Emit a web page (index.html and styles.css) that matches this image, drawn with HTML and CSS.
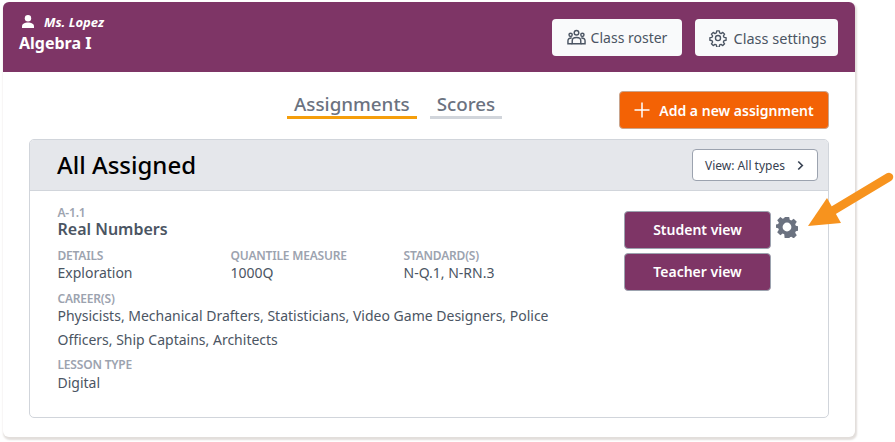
FILE: index.html
```html
<!DOCTYPE html>
<html lang="en">
<head>
<meta charset="utf-8">
<title>Algebra I</title>
<link rel="stylesheet" href="styles.css">
</head>
<body>
<div class="page">
  <header class="class-bar">
    <div class="class-info">
      <div class="teacher">
        <svg class="person" viewBox="0 0 16 16" width="16" height="16"><circle cx="8" cy="4.2" r="3.2" fill="#fff"/><path d="M2 14v-1.600C2 9.800 5 8.600 8 8.600s6 1.200 6 3.800V14z" fill="#fff"/></svg>
        <span>Ms. Lopez</span>
      </div>
      <div class="class-name">Algebra I</div>
    </div>
    <div class="class-actions">
      <button class="light-btn roster">
        <svg viewBox="0 0 20 20" width="19" height="19" fill="none" stroke="#4b5563" stroke-width="1.500"><circle cx="10" cy="5" r="2.400"/><circle cx="3.800" cy="7.200" r="1.700"/><circle cx="16.200" cy="7.200" r="1.700"/><path d="M5.500 16.500v-3.200c0-2 2-3.300 4.500-3.300s4.500 1.300 4.500 3.300v3.200z"/><path d="M5 10.500C2.500 10.300 1 11.500 1 13.500v3h4.500M15 10.500c2.500-.2 4 1 4 3v3h-4.500"/></svg>
        Class roster
      </button>
      <button class="light-btn settings">
        <svg viewBox="0 0 24 24" width="18" height="18" fill="none" stroke="#4b5563" stroke-width="1.800" stroke-linejoin="round"><path d="M10.300 2.500h3.400l.5 2.800 1.900.8 2.300-1.600 2.400 2.400-1.600 2.300.8 1.900 2.800.5v3.400l-2.800.5-.8 1.900 1.600 2.300-2.400 2.400-2.300-1.600-1.900.8-.5 2.800h-3.400l-.5-2.800-1.900-.8-2.300 1.600-2.400-2.400 1.600-2.300-.8-1.900-2.800-.5v-3.400l2.800-.5.8-1.900-1.600-2.300 2.400-2.400 2.300 1.600 1.900-.8z"/><circle cx="12" cy="12" r="3.400"/></svg>
        Class settings
      </button>
    </div>
  </header>

  <div class="toolbar">
    <nav class="tabs">
      <a class="tab active">Assignments</a>
      <a class="tab">Scores</a>
    </nav>
    <button class="add-btn">
      <svg viewBox="0 0 16 16" width="16" height="16" stroke="#fff" stroke-width="1.500"><path d="M8 .5v15M.5 8h15"/></svg>
      Add a new assignment
    </button>
  </div>

  <section class="panel">
    <div class="panel-head">
      <h1>All Assigned</h1>
      <button class="view-btn">View: All types
        <svg viewBox="0 0 10 12" width="9" height="11" fill="none" stroke="#374151" stroke-width="1.800"><path d="M2.500 1.500 7 6l-4.500 4.500"/></svg>
      </button>
    </div>
    <div class="panel-body">
      <div class="lesson">
        <div class="label code">A-1.1</div>
        <h2>Real Numbers</h2>
        <div class="meta-row">
          <div class="meta"><div class="label">DETAILS</div><div class="value">Exploration</div></div>
          <div class="meta"><div class="label">QUANTILE MEASURE</div><div class="value">1000Q</div></div>
          <div class="meta"><div class="label">STANDARD(S)</div><div class="value">N-Q.1, N-RN.3</div></div>
        </div>
        <div class="block">
          <div class="label">CAREER(S)</div>
          <div class="value careers">Physicists, Mechanical Drafters, Statisticians, Video Game Designers, Police Officers, Ship Captains, Architects</div>
        </div>
        <div class="block lesson-type">
          <div class="label">LESSON TYPE</div>
          <div class="value">Digital</div>
        </div>
      </div>
      <div class="views">
        <div class="view-row">
          <button class="plum-btn">Student view</button>
          <svg class="gear" viewBox="0 0 24 24" width="22" height="22"><path fill="#6b7280" fill-rule="evenodd" d="M9.600 1h4.800l.6 3.100 1.700.7 2.600-1.800 3.400 3.400-1.800 2.600.7 1.700 3 .6v4.800l-3 .6-.7 1.700 1.800 2.600-3.400 3.400-2.600-1.800-1.700.7-.6 3.100H9.600L9 19.900l-1.700-.7-2.600 1.800-3.400-3.400 1.800-2.600-.7-1.700-3-.6V9.400l3-.6.7-1.700L1.300 4.500 4.700 1.100l2.600 1.800L9 2.200zM12 7.200a4.800 4.800 0 1 0 0 9.600 4.800 4.800 0 0 0 0-9.600z"/></svg>
        </div>
        <button class="plum-btn">Teacher view</button>
      </div>
    </div>
  </section>
</div>
<svg class="arrow" viewBox="0 0 100 60" width="100" height="60"><path d="M87 7 32 40" stroke="#f7931e" stroke-width="8.500" stroke-linecap="round" fill="none"/><path d="M6 56 25 28 39 53z" fill="#f7931e"/></svg>
</body>
</html>
```
FILE: styles.css
```css
* { box-sizing: border-box; }
html, body { margin: 0; height: 100%; overflow: hidden; }
body {
  position: relative;
  background: #fff;
  font-family: "Noto Sans", "Open Sans", sans-serif;
  color: #374151;
  padding: 2px 0 0 3px;
}
button { font-family: inherit; cursor: pointer; }
.page {
  width: 852px;
  height: 435px;
  background: #fff;
  border-radius: 6px;
  box-shadow: 1px 2px 2px 1px #e2dedb;
}
.class-bar {
  height: 70px;
  background: #7e3566;
  border-radius: 6px 6px 0 0;
  display: flex;
  justify-content: space-between;
  padding: 0 17px 0 16px;
  color: #fff;
}
.class-info { padding-top: 11px; }
.teacher {
  display: flex;
  align-items: center;
  gap: 8px;
  font-size: 13px;
  font-weight: 700;
  font-style: italic;
  line-height: 18px;
}
.person { margin-left: 1px; }
.class-name { font-size: 16px; font-weight: 700; line-height: 24px; }
.class-actions { display: flex; gap: 13px; padding-top: 17px; }
.light-btn {
  height: 37px;
  border: 0;
  border-radius: 4px;
  background: #f9fafb;
  color: #4b5563;
  font-size: 14.500px;
  display: flex;
  align-items: center;
  justify-content: center;
  gap: 5px;
  padding: 0;
}
.roster { width: 130px; font-size: 14px; }
.settings { width: 143px; gap: 7px; padding-left: 2px; }
.toolbar {
  position: relative;
  height: 67px;
  display: flex;
  justify-content: flex-end;
  padding: 19px 26px 0 0;
}
.tabs {
  position: absolute;
  left: 284px;
  top: 18px;
  display: flex;
  gap: 13px;
}
.tab {
  height: 29px;
  padding: 0 7px;
  font-size: 18.800px;
  font-weight: 500;
  line-height: 28px;
  color: #6b7280;
  border-bottom: 3px solid #d1d5db;
}
.tab.active { border-bottom-color: #f59e0b; }
.add-btn {
  width: 210px;
  height: 38px;
  border: 1px solid #c9a58e;
  border-radius: 4px;
  background: #f36205;
  color: #fff;
  font-size: 14px;
  font-weight: 600;
  display: flex;
  align-items: center;
  justify-content: center;
  gap: 9px;
  padding: 0;
}
.panel {
  margin-left: 26px;
  width: 800px;
  height: 279px;
  border: 1px solid #d1d5db;
  border-radius: 5px;
  background: #fff;
}
.panel-head {
  height: 51px;
  background: #e5e7eb;
  border-bottom: 1px solid #d1d5db;
  border-radius: 4px 4px 0 0;
  display: flex;
  align-items: center;
  justify-content: space-between;
  padding: 0 10px 0 27px;
}
h1 { margin: 0; font-size: 24px; font-weight: 500; color: #000; line-height: 32px; }
.view-btn {
  width: 126px;
  height: 32px;
  border: 1px solid #9ca3af;
  border-radius: 4px;
  background: #fff;
  color: #374151;
  font-size: 12px;
  display: flex;
  align-items: center;
  justify-content: center;
  gap: 11px;
  padding: 0;
}
.panel-body {
  display: flex;
  justify-content: space-between;
  padding: 15px 57px 0 27.500px;
}
.lesson { width: 500px; flex: none; }
.label {
  font-size: 12px;
  font-weight: 600;
  line-height: 13px;
  color: #9ca3af;
  letter-spacing: -0.2px;
}
h2 { margin: 0; font-size: 16px; font-weight: 600; color: #4b5563; line-height: 20px; }
.meta-row { display: flex; margin-top: 10px; }
.meta { width: 173px; flex: none; }
.value { font-size: 14px; line-height: 24px; color: #4b5563; margin-top: -1px; }
.careers { line-height: 23.500px; }
.lesson-type .value { margin-top: 0; line-height: 23px; }
.block { margin-top: 7px; }
.block.lesson-type { margin-top: 7px; }
.views { display: flex; flex-direction: column; gap: 4px; padding-top: 5px; width: 147px; flex: none; }
.view-row { position: relative; height: 38px; }
.plum-btn {
  width: 147px;
  height: 38px;
  border: 1px solid #9ca3af;
  border-radius: 4px;
  background: #7e3566;
  color: #fff;
  font-size: 14px;
  font-weight: 600;
  padding: 0 0 2px;
}
.gear { position: absolute; left: 152px; top: 5px; }
.arrow { position: absolute; left: 802px; top: 170px; }
```
